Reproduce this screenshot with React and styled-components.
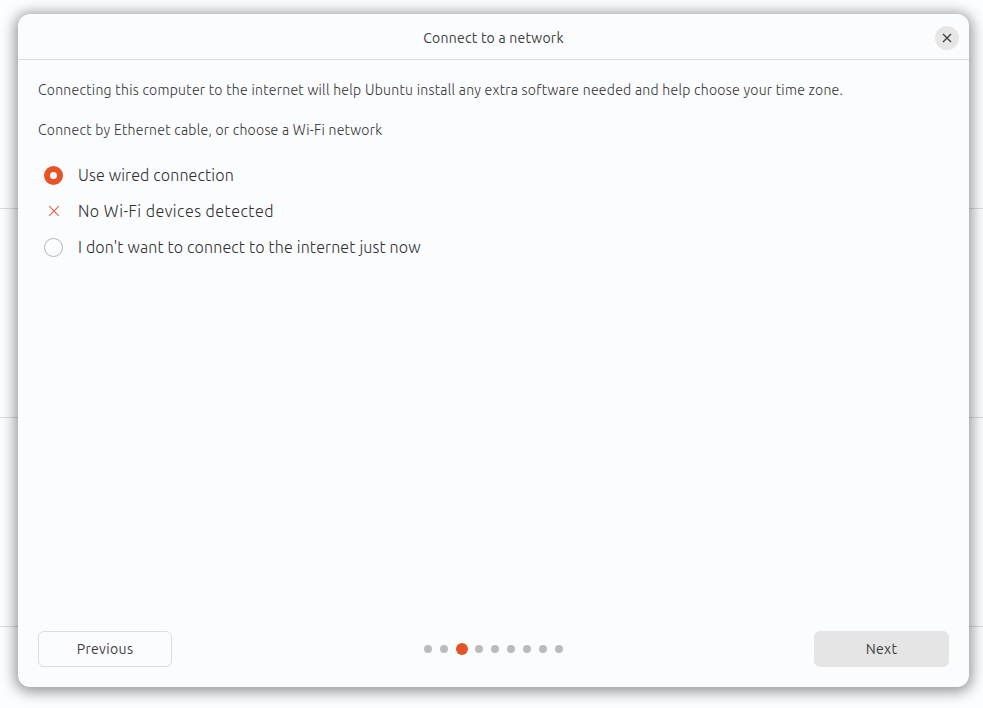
import React from "react";
import styled, { createGlobalStyle } from "styled-components";

const GlobalStyle = createGlobalStyle`
  * { box-sizing: border-box; }
  html, body { margin: 0; height: 100%; overflow: hidden; }
  body {
    background: #fcfdfe;
    color: #3d3d3d;
    font-family: Ubuntu, "Noto Sans", sans-serif;
    font-size: 14px;
  }
`;

const Desktop = styled.div`
  width: 983px;
  height: 708px;
  padding: 14px 14px 21px 18px;
  overflow: hidden;
  background: repeating-linear-gradient(to bottom, #fcfdfe 0 208px, #dcdcdc 208px 209px);
`;

const Window = styled.main`
  width: 951px;
  height: 673px;
  display: flex;
  flex-direction: column;
  background: #fbfcfe;
  border-radius: 12px;
  box-shadow: 0 2px 14px 3px rgba(0, 0, 0, 0.41);
`;

const TitleBar = styled.header`
  height: 46px;
  flex: none;
  display: grid;
  grid-template-columns: 34px 1fr 34px;
  align-items: center;
  border-bottom: 1px solid #dcdddf;
`;

const Title = styled.h1`
  grid-column: 2;
  margin: 0;
  padding-top: 2px;
  text-align: center;
  font-size: 14px;
  font-weight: 400;
  line-height: 20px;
  letter-spacing: 0.24px;
`;

const CloseButton = styled.button`
  width: 24px;
  height: 24px;
  margin-top: 2px;
  padding: 0;
  display: grid;
  place-items: center;
  border: 0;
  border-radius: 50%;
  background: #e6e6e6;
`;

const Content = styled.section`
  flex: 1;
  padding: 20px 20px 0;
  color: #303030;
  font-weight: 300;
`;

const Paragraph = styled.p`
  margin: 0 0 20px;
  font-size: 14px;
  line-height: 20px;
  white-space: nowrap;
  letter-spacing: ${(p) => p.$tracking}px;
`;

const Options = styled.div`
  margin-top: -3px;
  display: flex;
  flex-direction: column;
`;

const Option = styled.label`
  height: 36px;
  display: grid;
  grid-template-columns: 31px 1fr;
  column-gap: 9px;
  align-items: center;
  font-size: 16px;
  line-height: 24px;
  letter-spacing: ${(p) => p.$tracking}px;
`;

const Mark = styled.span`
  display: grid;
  place-items: center;
`;

const Radio = styled.span`
  width: 19px;
  height: 19px;
  border-radius: 50%;
  border: ${(p) => (p.$checked ? "6px solid #e65327" : "1px solid #b4b4b5")};
  background: #fbfcfe;
`;

const Footer = styled.footer`
  padding: 0 20px 20px;
  display: grid;
  grid-template-columns: 134px 1fr 135px;
  align-items: center;
`;

const ActionButton = styled.button`
  height: 36px;
  padding: 0;
  border: 1px solid ${(p) => (p.$filled ? "#e5e5e5" : "#dcdddf")};
  border-radius: 6px;
  background: ${(p) => (p.$filled ? "#e5e5e5" : "transparent")};
  color: inherit;
  font: inherit;
  letter-spacing: 0.35px;
`;

const Steps = styled.div`
  display: flex;
  justify-content: center;
  align-items: center;
  gap: 8px;
  padding-left: 1px;
`;

const Step = styled.span`
  width: ${(p) => (p.$current ? 12 : 8)}px;
  height: ${(p) => (p.$current ? 12 : 8)}px;
  margin-right: ${(p) => (p.$current ? -1 : 0)}px;
  border-radius: 50%;
  background: ${(p) => (p.$current ? "#e65327" : "#bbbbbb")};
`;

const Cross = ({ size, color, weight }) => (
  <svg width={size} height={size} viewBox="0 0 10 10" fill="none" stroke={color} strokeWidth={weight}>
    <path d="M1 1L9 9M9 1L1 9" />
  </svg>
);

const steps = Array.from({ length: 9 }, (_, index) => index);

export default function App() {
  return (
    <Desktop>
      <GlobalStyle />
      <Window>
        <TitleBar>
          <Title>Connect to a network</Title>
          <CloseButton aria-label="Close">
            <Cross size={10} color="#3d3d3d" weight={1.3} />
          </CloseButton>
        </TitleBar>
        <Content>
          <Paragraph $tracking={0.268}>
            Connecting this computer to the internet will help Ubuntu install any extra software needed and help choose your time zone.
          </Paragraph>
          <Paragraph $tracking={0.26}>Connect by Ethernet cable, or choose a Wi-Fi network</Paragraph>
          <Options>
            <Option $tracking={0.15}>
              <Mark><Radio $checked /></Mark>
              Use wired connection
            </Option>
            <Option $tracking={0.49}>
              <Mark><Cross size={12} color="#e0603f" weight={0.9} /></Mark>
              No Wi-Fi devices detected
            </Option>
            <Option $tracking={0.155}>
              <Mark><Radio /></Mark>
              I don't want to connect to the internet just now
            </Option>
          </Options>
        </Content>
        <Footer>
          <ActionButton>Previous</ActionButton>
          <Steps>
            {steps.map((step) => <Step key={step} $current={step === 2} />)}
          </Steps>
          <ActionButton $filled>Next</ActionButton>
        </Footer>
      </Window>
    </Desktop>
  );
}
